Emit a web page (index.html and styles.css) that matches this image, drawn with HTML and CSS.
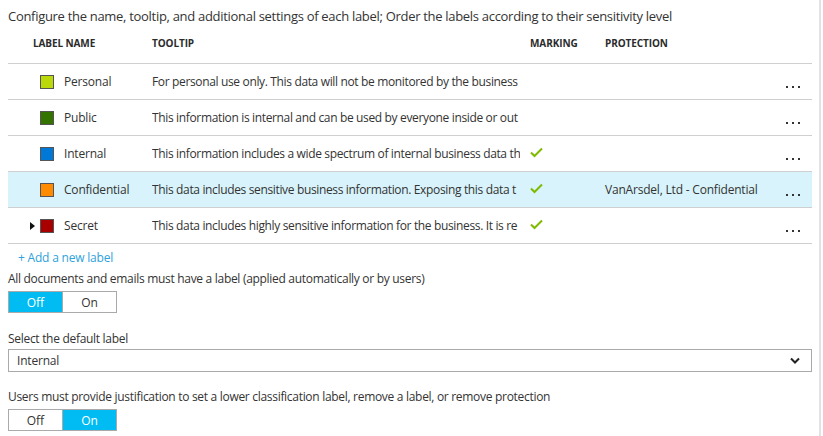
FILE: index.html
```
<!DOCTYPE html>
<html lang="en">
<head>
<meta charset="utf-8">
<title>Labels</title>
<link rel="stylesheet" href="styles.css">
</head>
<body>
<div class="page">
  <div class="title">Configure the name, tooltip, and additional settings of each label; Order the labels according to their sensitivity level</div>
  <div class="table">
    <div class="row head">
      <div class="h-a"></div>
      <div class="h-name">LABEL NAME</div>
      <div class="h-tip">TOOLTIP</div>
      <div class="h-mark">MARKING</div>
      <div class="h-prot">PROTECTION</div>
      <div class="h-more"></div>
    </div>
    <div class="row item">
      <div class="c-a"></div>
      <div class="c-name"><span class="sq personal"></span>Personal</div>
      <div class="c-tip">For personal use only. This data will not be monitored by the business</div>
      <div class="c-mark"></div>
      <div class="c-prot"></div>
      <div class="c-more"><span class="dots"><i></i><i></i><i></i></span></div>
    </div>
    <div class="row item">
      <div class="c-a"></div>
      <div class="c-name"><span class="sq public"></span>Public</div>
      <div class="c-tip">This information is internal and can be used by everyone inside or out</div>
      <div class="c-mark"></div>
      <div class="c-prot"></div>
      <div class="c-more"><span class="dots"><i></i><i></i><i></i></span></div>
    </div>
    <div class="row item">
      <div class="c-a"></div>
      <div class="c-name"><span class="sq internal"></span>Internal</div>
      <div class="c-tip">This information includes a wide spectrum of internal business data th</div>
      <div class="c-mark"><svg class="check" width="13" height="11" viewBox="0 0 13 11"><path d="M1 5.5 L4.5 9 L12 1.5" fill="none" stroke="#7fba00" stroke-width="2"/></svg></div>
      <div class="c-prot"></div>
      <div class="c-more"><span class="dots"><i></i><i></i><i></i></span></div>
    </div>
    <div class="row item selected">
      <div class="c-a"></div>
      <div class="c-name"><span class="sq confidential"></span>Confidential</div>
      <div class="c-tip">This data includes sensitive business information. Exposing this data t</div>
      <div class="c-mark"><svg class="check" width="13" height="11" viewBox="0 0 13 11"><path d="M1 5.5 L4.5 9 L12 1.5" fill="none" stroke="#7fba00" stroke-width="2"/></svg></div>
      <div class="c-prot">VanArsdel, Ltd - Confidential</div>
      <div class="c-more"><span class="dots"><i></i><i></i><i></i></span></div>
    </div>
    <div class="row item">
      <div class="c-a"><span class="tri"></span></div>
      <div class="c-name"><span class="sq secret"></span>Secret</div>
      <div class="c-tip">This data includes highly sensitive information for the business. It is re</div>
      <div class="c-mark"><svg class="check" width="13" height="11" viewBox="0 0 13 11"><path d="M1 5.5 L4.5 9 L12 1.5" fill="none" stroke="#7fba00" stroke-width="2"/></svg></div>
      <div class="c-prot"></div>
      <div class="c-more"><span class="dots"><i></i><i></i><i></i></span></div>
    </div>
  </div>
  <div class="add">+ Add a new label</div>
  <div class="label l1">All documents and emails must have a label (applied automatically or by users)</div>
  <div class="toggle">
    <span class="seg on">Off</span><span class="seg">On</span>
  </div>
  <div class="label l2">Select the default label</div>
  <div class="select">
    <span>Internal</span>
    <svg width="10" height="7" viewBox="0 0 10 7"><path d="M1 1.5 L5 5.5 L9 1.5" fill="none" stroke="#222" stroke-width="2"/></svg>
  </div>
  <div class="label l3">Users must provide justification to set a lower classification label, remove a label, or remove protection</div>
  <div class="toggle">
    <span class="seg">Off</span><span class="seg on">On</span>
  </div>
</div>
</body>
</html>
```
FILE: styles.css
```
html, body {
  margin: 0;
  padding: 0;
  background: #fff;
}
body {
  font-family: "Open Sans", "Noto Sans", sans-serif;
  color: #333;
  font-size: 12px;
}
.page {
  width: 804px;
  height: 436px;
  padding: 0 7px 0 8px;
  border-right: 2px solid #e2e2e2;
  overflow: hidden;
}
.title {
  padding-top: 6px;
  height: 20px;
  line-height: 20px;
  font-size: 13px;
  color: #333;
  letter-spacing: -0.3px;
}
.table {
  display: flex;
  flex-direction: column;
}
.row {
  display: grid;
  grid-template-columns: 24px 120px 378px 75px 1fr 40px;
}
.head {
  height: 37px;
  font-size: 10px;
  font-weight: 700;
  color: #2b2b2b;
  line-height: 14px;
  padding-top: 10px;
  box-sizing: border-box;
  letter-spacing: -0.1px;
  align-items: start;
}
.h-name { padding-left: 1px; }
.item {
  height: 36px;
  box-sizing: border-box;
  border-top: 1px solid #cfcfcf;
  align-items: center;
  letter-spacing: -0.2px;
}
.item:last-child {
  border-bottom: 1px solid #cfcfcf;
  height: 37px;
}
.selected {
  background: #d8f3fb;
}
.c-name {
  display: flex;
  align-items: center;
  padding-left: 8px;
}
.sq {
  width: 12px;
  height: 12px;
  border: 1px solid #555;
  margin-right: 10px;
  flex: none;
}
.personal { background: #bad80a; }
.public { background: #347300; }
.internal { background: #0078d7; }
.confidential { background: #ff8c00; }
.secret { background: #a80000; }
.c-tip {
  white-space: nowrap;
  overflow: hidden;
  margin-right: 10px;
  letter-spacing: -0.35px;
}
.c-a {
  display: flex;
  align-items: center;
}
.tri {
  margin-left: 22px;
  width: 0;
  height: 0;
  border-top: 4.5px solid transparent;
  border-bottom: 4.5px solid transparent;
  border-left: 5px solid #111;
}
.check {
  display: block;
  margin-top: -2px;
}
.c-prot {
  white-space: nowrap;
}
.c-more {
  padding-left: 14px;
}
.dots {
  display: flex;
  gap: 4px;
  margin-top: 10px;
}
.dots i {
  width: 2px;
  height: 2px;
  background: #333;
}
.add {
  color: #2ea3dd;
  padding-left: 10px;
  margin-top: 6px;
  line-height: 16px;
  letter-spacing: -0.2px;
}
.label {
  line-height: 16px;
  letter-spacing: -0.3px;
}
.l1 { margin-top: 5px; }
.l2 { margin-top: 18px; }
.l3 { margin-top: 17px; }
.toggle {
  display: flex;
  width: 109px;
  height: 22px;
  margin-top: 4px;
  box-sizing: border-box;
  border: 1px solid #aaa;
}
.seg {
  flex: 1;
  display: flex;
  align-items: center;
  justify-content: center;
  background: #fff;
  color: #333;
}
.seg.on {
  background: #00bcf2;
  color: #fff;
}
.toggle .seg + .seg {
  border-left: 1px solid #aaa;
}
.select {
  margin-top: 2px;
  height: 23px;
  box-sizing: border-box;
  border: 1px solid #aaa;
  display: flex;
  align-items: center;
  justify-content: space-between;
  padding: 0 11px 0 8px;
  letter-spacing: -0.2px;
}
```
